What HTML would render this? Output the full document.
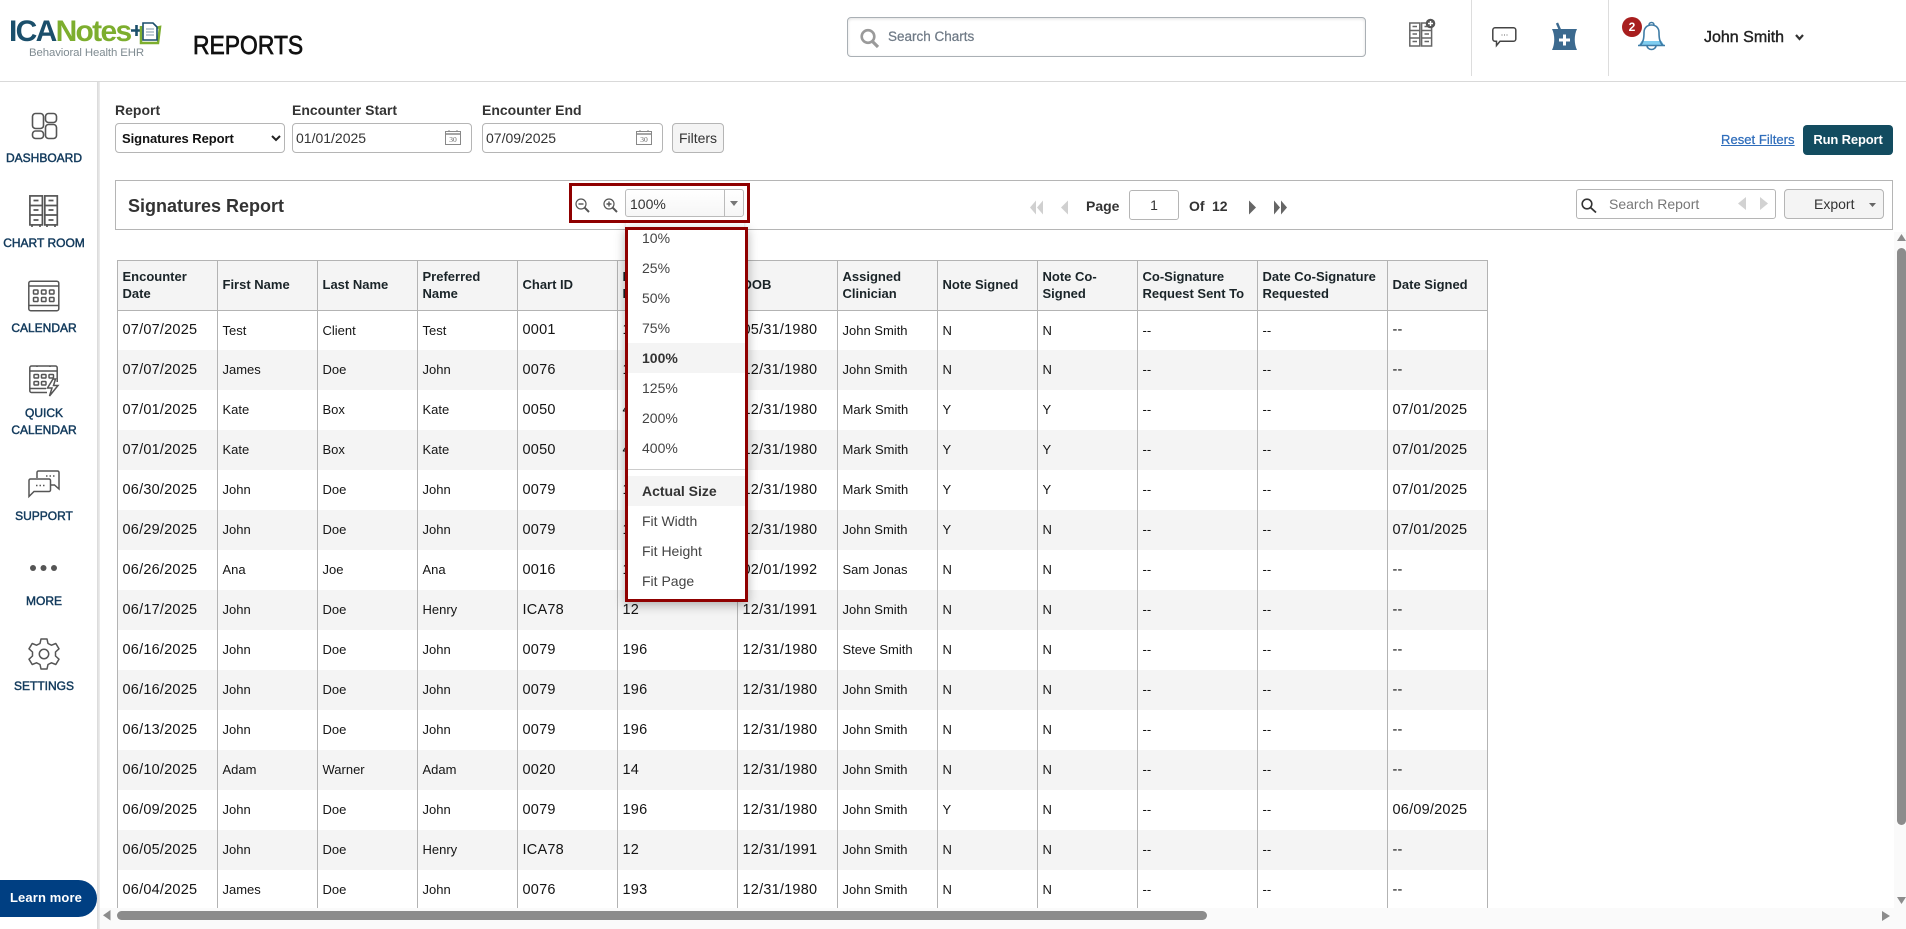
<!DOCTYPE html>
<html lang="en">
<head>
<meta charset="utf-8">
<title>Reports</title>
<style>
*{box-sizing:border-box}
html,body{margin:0;padding:0;width:1906px;height:929px;overflow:hidden;background:#fff;font-family:"Liberation Sans",Arial,sans-serif;color:#333}
.a{position:absolute}
.t{position:absolute;white-space:nowrap}
svg{position:absolute;overflow:visible}
.nav{position:absolute;left:0;width:88px;text-align:center;font-size:12px;line-height:17px;color:#123a5c;-webkit-text-stroke:.45px #123a5c;white-space:nowrap;margin-top:1px}
.lbl{position:absolute;top:102px;font-size:14px;font-weight:bold;line-height:16px;color:#333;white-space:nowrap}
.inp{position:absolute;top:123px;height:30px;border:1px solid #b5b5b5;border-radius:4px;background:#fff}
#tw{position:absolute;left:117px;top:260px;width:1371px;height:648px;overflow:hidden}
table{border-collapse:separate;border-spacing:0;table-layout:fixed;width:1371px;color:#141414}
th{height:51px;background:#f4f4f4;border-top:1px solid #b3b3b3;border-bottom:1px solid #b3b3b3;border-left:1px solid #b3b3b3;font-size:13px;line-height:17px;font-weight:bold;text-align:left;padding:0 3px 2px 4.5px;color:#1a2428}
td{height:40px;border-left:1px solid #b3b3b3;font-size:13px;padding:0 3px 1px 4.5px;white-space:nowrap;overflow:hidden}
tr:first-child td{height:39px}
th:last-child,td:last-child{border-right:1px solid #b3b3b3}
tbody tr:nth-child(even) td{background:#f4f4f4}
td:nth-child(1),td:nth-child(5),td:nth-child(6),td:nth-child(7),td:nth-child(13){font-size:14.5px;letter-spacing:.22px}
.mi{position:absolute;left:628px;width:117px;height:30px;line-height:30px;padding-left:14px;font-size:14px;color:#444}
.mi.b{font-weight:bold;background:#f4f4f4;color:#333}
</style>
</head>
<body>

<!-- top bar -->
<div class="a" style="left:0;top:81px;width:1906px;height:1px;background:#d9d9d9"></div>
<div class="t" style="left:9px;top:15px;font-size:30px;line-height:34px;font-weight:bold;letter-spacing:-1.7px"><span style="color:#1b4f6b">ICA</span><span style="color:#7dae2e">Notes</span></div>
<div class="t" style="left:29px;top:46px;font-size:11.4px;line-height:14px;color:#7f8b91;letter-spacing:-.1px">Behavioral Health EHR</div>
<svg style="left:130px;top:20px" width="32" height="28" viewBox="0 0 32 28">
<path d="M1 10.5H12M6.5 5V16" stroke="#1b4f6b" stroke-width="2.6" fill="none"/>
<path d="M11 6V23H28L30 7L26 8" fill="none" stroke="#7dae2e" stroke-width="2.5"/>
<path d="M13 3H23L27 7V20H13Z" fill="#fff" stroke="#1b4f6b" stroke-width="1.6"/>
<path d="M16 9H24M16 12H24M16 15H24" stroke="#7f9aa8" stroke-width="1"/>
</svg>
<div class="t" style="left:193px;top:30px;font-size:26px;line-height:30px;color:#111;-webkit-text-stroke:.7px #111;transform:scaleX(.88);transform-origin:left center">REPORTS</div>

<div class="a" style="left:847px;top:17px;width:519px;height:40px;border:1px solid #aab0b5;border-radius:4px;box-shadow:inset 0 1px 3px rgba(0,0,0,.12)"></div>
<svg style="left:860px;top:29px" width="20" height="19" viewBox="0 0 20 19"><circle cx="8" cy="7.5" r="6.3" fill="none" stroke="#9a9a9a" stroke-width="2.6"/><path d="M12.5 12.5L18 18" stroke="#9a9a9a" stroke-width="3.2"/></svg>
<div class="t" style="left:888px;top:29px;font-size:13.5px;line-height:16px;color:#6f7a86;-webkit-text-stroke:.25px #6f7a86">Search Charts</div>

<svg style="left:1409px;top:19px" width="27" height="28" viewBox="0 0 27 28" fill="none" stroke="#666" stroke-width="1.5">
<rect x=".8" y="4" width="10" height="23"/><rect x="12.6" y="4" width="10" height="23"/>
<path d="M.8 11.5H10.800M.8 19H10.800M12.600 11.500H22.600M12.600 19H22.600M3.500 7.500H8M3.500 15H8M3.500 22.500H8M15.500 7.500H20M15.500 15H20M15.500 22.500H20"/>
<circle cx="21.5" cy="4.5" r="4.8" fill="#555" stroke="none"/><path d="M19 4.5H24M21.5 2V7" stroke="#fff" stroke-width="1.4"/>
</svg>
<div class="a" style="left:1471px;top:0;width:1px;height:76px;background:#ddd"></div>
<svg style="left:1492px;top:27px" width="25" height="20" viewBox="0 0 25 20" fill="none"><path d="M3 .8H21.5A2.3 2.3 0 0 1 23.8 3V12A2.3 2.3 0 0 1 21.5 14.3H8L4.5 18.5V14.3H3A2.3 2.3 0 0 1 .8 12V3A2.3 2.3 0 0 1 3 .8Z" stroke="#444" stroke-width="1.5"/><path d="M9.5 8H10.5M12 8H13M14.5 8H15.5" stroke="#666"/></svg>
<svg style="left:1552px;top:23px" width="26" height="28" viewBox="0 0 26 28"><path d="M5 0L8 7" stroke="#3c6a8f" stroke-width="2.4"/><path d="M0 6H25C22 12 22 21 25 27H0C3 21 3 12 0 6Z" fill="#3c6a8f"/><path d="M7 17H18M12.500 11.500V22.500" stroke="#fff" stroke-width="3"/></svg>
<div class="a" style="left:1608px;top:0;width:1px;height:76px;background:#ddd"></div>
<svg style="left:1637px;top:21px" width="29" height="29" viewBox="0 0 29 29" fill="none">
<path d="M4.500 20H24.500L27 24H2Z" fill="#7fcdf0"/>
<path d="M10 24.500A4.500 4 0 0 0 19 24.500" stroke="#3f7ca6" stroke-width="1.600"/>
<path d="M1 24.500H28M3 24.500C6.500 21 7 17 7 11.500C7 7 10 4 14.500 4C19 4 22 7 22 11.500C22 17 22.500 21 26 24.500" stroke="#3f7ca6" stroke-width="1.600"/>
<path d="M12 4A2.500 2.500 0 0 1 17 4" stroke="#3f7ca6" stroke-width="1.600"/>
</svg>
<div class="a" style="left:1622px;top:17px;width:20px;height:20px;border-radius:50%;background:#a81e1e;color:#fff;font-size:12px;font-weight:bold;line-height:20px;text-align:center">2</div>
<div class="t" style="left:1704px;top:28px;font-size:16px;line-height:20px;color:#222;-webkit-text-stroke:.4px #222">John Smith</div>
<svg style="left:1795px;top:34px" width="9" height="7" viewBox="0 0 9 7"><path d="M1 1L4.500 5L8 1" fill="none" stroke="#333" stroke-width="2.200"/></svg>

<!-- sidebar -->
<div class="a" style="left:97px;top:82px;width:3px;height:847px;background:linear-gradient(90deg,#d8d8d8,#eee)"></div>

<svg style="left:31px;top:112px" width="28" height="28" viewBox="0 0 28 28" fill="none" stroke="#555" stroke-width="1.6">
<rect x="1.500" y="1.500" width="11" height="15" rx="3"/><rect x="14.500" y="1.500" width="11" height="9" rx="3"/><rect x="1.500" y="19" width="11" height="7.500" rx="3"/><rect x="14.500" y="12.500" width="11" height="14" rx="3"/></svg>
<div class="nav" style="top:149px">DASHBOARD</div>

<svg style="left:29px;top:195px" width="30" height="33" viewBox="0 0 30 33" fill="none" stroke="#555" stroke-width="1.700">
<rect x=".9" y=".9" width="12.500" height="29"/><rect x="15.800" y=".9" width="12.500" height="29"/>
<path d="M.9 10.500H13.400M.9 20H13.400M15.800 10.500H28.300M15.800 20H28.300M4.500 5.500H9.500M4.500 15H9.500M4.500 25H9.500M19.500 5.500H24.500M19.500 15H24.500M19.500 25H24.500M3 30V32M11 30V32M18 30V32M26 30V32"/></svg>
<div class="nav" style="top:234px">CHART ROOM</div>

<svg style="left:28px;top:280px" width="32" height="32" viewBox="0 0 32 32" fill="none" stroke="#555" stroke-width="1.500">
<rect x=".8" y="1.200" width="30" height="29.500" rx="2"/><path d="M.8 6H31M.8 25.500H31M8 .5V2M24 .5V2"/>
<rect x="5.500" y="10" width="4.500" height="4" rx=".8"/><rect x="13.500" y="10" width="4.500" height="4" rx=".8"/><rect x="21.500" y="10" width="4.500" height="4" rx=".8"/>
<rect x="5.500" y="17.500" width="4.500" height="4" rx=".8"/><rect x="13.500" y="17.500" width="4.500" height="4" rx=".8"/><rect x="21.500" y="17.500" width="4.500" height="4" rx=".8"/></svg>
<div class="nav" style="top:319px">CALENDAR</div>

<svg style="left:29px;top:365px" width="30" height="32" viewBox="0 0 30 32" fill="none" stroke="#555" stroke-width="1.500">
<path d="M18 27.500H2.500A1.700 1.700 0 0 1 .8 25.800V2.700A1.700 1.700 0 0 1 2.500 1H26.500A1.700 1.700 0 0 1 28.200 2.700V17"/><path d="M.8 6H28.200M.8 23.500H17M8 .5V2M21 .5V2"/>
<rect x="5" y="9.500" width="4.500" height="3.500" rx=".8"/><rect x="12.500" y="9.500" width="4.500" height="3.500" rx=".8"/><rect x="20" y="9.500" width="4.500" height="3.500" rx=".8"/>
<rect x="5" y="16.500" width="4.500" height="3.500" rx=".8"/><rect x="12.500" y="16.500" width="4.500" height="3.500" rx=".8"/>
<path d="M24 14L18.500 23H23L20.500 31L29 20.500H24.500L26.500 14Z" fill="#fff"/></svg>
<div class="nav" style="top:404px">QUICK</div>
<div class="nav" style="top:421px">CALENDAR</div>

<svg style="left:28px;top:470px" width="32" height="28" viewBox="0 0 32 28" fill="none" stroke="#555" stroke-width="1.500">
<path d="M9 8V2.500A1.500 1.500 0 0 1 10.500 1H29.500A1.500 1.500 0 0 1 31 2.500V19L26.500 15H22"/>
<path d="M2.500 9H21A1.500 1.500 0 0 1 22.500 10.500V20A1.500 1.500 0 0 1 21 21.500H6L1 26.500V10.500A1.500 1.500 0 0 1 2.500 9Z" fill="#fff"/>
<path d="M8 15.500H9.500M11.500 15.500H13M15 15.500H16.500M18 6H19.500M21.500 6H23M25 6H26.500"/></svg>
<div class="nav" style="top:507px">SUPPORT</div>

<svg style="left:29px;top:564px" width="30" height="8" viewBox="0 0 30 8" fill="#555"><circle cx="4" cy="4" r="3"/><circle cx="14.500" cy="4" r="3"/><circle cx="25" cy="4" r="3"/></svg>
<div class="nav" style="top:592px">MORE</div>

<svg style="left:28px;top:638px" width="32" height="32" viewBox="0 0 32 32" fill="none" stroke="#555" stroke-width="1.500" stroke-linejoin="round">
<path d="M13 1H19L20 5.500L23.500 7.200L27.800 5.500L31 10.800L27.500 14V18L31 21.200L27.800 26.500L23.500 24.800L20 26.500L19 31H13L12 26.500L8.500 24.800L4.200 26.500L1 21.200L4.500 18V14L1 10.800L4.200 5.500L8.500 7.200L12 5.500Z"/>
<circle cx="16" cy="16" r="4.700"/></svg>
<div class="nav" style="top:677px">SETTINGS</div>

<div class="a" style="left:-18px;top:880px;width:115px;height:37px;border-radius:19px;background:#003f82"></div>
<div class="t" style="left:10px;top:890px;font-size:13px;line-height:16px;font-weight:bold;color:#fff;letter-spacing:.12px">Learn more</div>

<!-- filters -->
<div class="lbl" style="left:115px">Report</div>
<div class="lbl" style="left:292px">Encounter Start</div>
<div class="lbl" style="left:482px">Encounter End</div>

<div class="inp" style="left:115px;width:170px"></div>
<div class="t" style="left:122px;top:131px;font-size:13px;line-height:16px;font-weight:bold;color:#111;letter-spacing:-.05px">Signatures Report</div>
<svg style="left:271px;top:135px" width="10" height="7" viewBox="0 0 10 7"><path d="M1 1L5 5L9 1" fill="none" stroke="#222" stroke-width="2"/></svg>

<div class="inp" style="left:292px;width:180px"></div>
<div class="t" style="left:296px;top:130px;font-size:14px;line-height:16px">01/01/2025</div>
<svg style="left:445px;top:130px" width="16" height="15" viewBox="0 0 16 15"><rect x=".5" y="1.500" width="15" height="13" fill="#fff" stroke="#888"/><path d="M.5 4H15.500" stroke="#888" stroke-width="1.500"/><path d="M4 0V2M12 0V2" stroke="#888"/><text x="8" y="12" font-size="7.500" text-anchor="middle" fill="#666" font-family="Liberation Serif">30</text></svg>

<div class="inp" style="left:482px;width:181px"></div>
<div class="t" style="left:486px;top:130px;font-size:14px;line-height:16px">07/09/2025</div>
<svg style="left:636px;top:130px" width="16" height="15" viewBox="0 0 16 15"><rect x=".5" y="1.500" width="15" height="13" fill="#fff" stroke="#888"/><path d="M.5 4H15.500" stroke="#888" stroke-width="1.500"/><path d="M4 0V2M12 0V2" stroke="#888"/><text x="8" y="12" font-size="7.500" text-anchor="middle" fill="#666" font-family="Liberation Serif">30</text></svg>

<div class="inp" style="left:672px;width:52px;background:#f4f4f4;text-align:center;font-size:14px;line-height:28px">Filters</div>

<div class="t" style="left:1721px;top:132px;font-size:13px;line-height:16px;color:#2f6dbb;text-decoration:underline;-webkit-text-stroke:.25px #2f6dbb;letter-spacing:.05px">Reset Filters</div>
<div class="a" style="left:1803px;top:125px;width:90px;height:30px;background:#134c60;border-radius:4px;color:#fff;font-size:13px;font-weight:bold;text-align:center;line-height:30px;letter-spacing:-.15px">Run Report</div>

<!-- report toolbar -->
<div class="a" style="left:115px;top:180px;width:1778px;height:50px;border:1px solid #b5b5b5"></div>
<div class="t" style="left:128px;top:196px;font-size:18px;line-height:21px;font-weight:bold;color:#333">Signatures Report</div>

<!-- pager -->
<svg style="left:1029px;top:200px" width="15" height="15" viewBox="0 0 15 15" fill="#d0d0d0"><path d="M7 .5V14.500L1 7.500ZM14 .5V14.500L8 7.500Z"/></svg>
<svg style="left:1060px;top:200px" width="9" height="15" viewBox="0 0 9 15" fill="#d0d0d0"><path d="M8 .5V14.500L1 7.500Z"/></svg>
<div class="t" style="left:1086px;top:198px;font-size:14px;line-height:16px;font-weight:bold">Page</div>
<div class="a" style="left:1129px;top:190px;width:50px;height:30px;border:1px solid #b5b5b5;border-radius:3px;text-align:center;font-size:14px;line-height:28px">1</div>
<div class="t" style="left:1189px;top:198px;font-size:14px;line-height:16px;font-weight:bold">Of</div>
<div class="t" style="left:1212px;top:198px;font-size:14px;line-height:16px;font-weight:bold">12</div>
<svg style="left:1248px;top:200px" width="9" height="15" viewBox="0 0 9 15" fill="#666"><path d="M1 .5V14.500L8 7.500Z"/></svg>
<svg style="left:1273px;top:200px" width="15" height="15" viewBox="0 0 15 15" fill="#666"><path d="M1 .5V14.500L7 7.500ZM8 .5V14.500L14 7.500Z"/></svg>

<!-- search report / export -->
<div class="a" style="left:1576px;top:189px;width:200px;height:30px;border:1px solid #b5b5b5;border-radius:3px"></div>
<svg style="left:1581px;top:198px" width="16" height="15" viewBox="0 0 16 15"><circle cx="6" cy="6" r="4.800" fill="none" stroke="#333" stroke-width="1.600"/><path d="M9.500 9.500L15 14.500" stroke="#333" stroke-width="1.800"/></svg>
<div class="t" style="left:1609px;top:196px;font-size:14px;line-height:16px;color:#777">Search Report</div>
<svg style="left:1738px;top:197px" width="30" height="13" viewBox="0 0 30 13" fill="#d2d2d2"><path d="M8 0V13L0 6.500ZM22 0V13L30 6.500Z"/></svg>
<div class="a" style="left:1784px;top:189px;width:100px;height:30px;border:1px solid #b5b5b5;border-radius:4px;background:#f4f4f4"></div>
<div class="t" style="left:1814px;top:196px;font-size:14px;line-height:16px;color:#333">Export</div>
<svg style="left:1869px;top:203px" width="7" height="4" viewBox="0 0 7 4" fill="#666"><path d="M0 0H7L3.500 4Z"/></svg>

<!-- table -->
<div id="tw">
<table>
<colgroup><col style="width:100px"><col style="width:100px"><col style="width:100px"><col style="width:100px"><col style="width:100px"><col style="width:120px"><col style="width:100px"><col style="width:100px"><col style="width:100px"><col style="width:100px"><col style="width:120px"><col style="width:130px"><col style="width:101px"></colgroup>
<thead><tr><th>Encounter Date</th><th>First Name</th><th>Last Name</th><th>Preferred Name</th><th>Chart ID</th><th>Encounter<br>ID</th><th>DOB</th><th>Assigned Clinician</th><th>Note Signed</th><th>Note Co-Signed</th><th>Co-Signature Request Sent To</th><th>Date Co-Signature Requested</th><th>Date Signed</th></tr></thead>
<tbody>
<tr><td>07/07/2025</td><td>Test</td><td>Client</td><td>Test</td><td>0001</td><td>1</td><td>05/31/1980</td><td>John Smith</td><td>N</td><td>N</td><td>--</td><td>--</td><td>--</td></tr>
<tr><td>07/07/2025</td><td>James</td><td>Doe</td><td>John</td><td>0076</td><td>193</td><td>12/31/1980</td><td>John Smith</td><td>N</td><td>N</td><td>--</td><td>--</td><td>--</td></tr>
<tr><td>07/01/2025</td><td>Kate</td><td>Box</td><td>Kate</td><td>0050</td><td>45</td><td>12/31/1980</td><td>Mark Smith</td><td>Y</td><td>Y</td><td>--</td><td>--</td><td>07/01/2025</td></tr>
<tr><td>07/01/2025</td><td>Kate</td><td>Box</td><td>Kate</td><td>0050</td><td>45</td><td>12/31/1980</td><td>Mark Smith</td><td>Y</td><td>Y</td><td>--</td><td>--</td><td>07/01/2025</td></tr>
<tr><td>06/30/2025</td><td>John</td><td>Doe</td><td>John</td><td>0079</td><td>196</td><td>12/31/1980</td><td>Mark Smith</td><td>Y</td><td>Y</td><td>--</td><td>--</td><td>07/01/2025</td></tr>
<tr><td>06/29/2025</td><td>John</td><td>Doe</td><td>John</td><td>0079</td><td>196</td><td>12/31/1980</td><td>John Smith</td><td>Y</td><td>N</td><td>--</td><td>--</td><td>07/01/2025</td></tr>
<tr><td>06/26/2025</td><td>Ana</td><td>Joe</td><td>Ana</td><td>0016</td><td>14</td><td>02/01/1992</td><td>Sam Jonas</td><td>N</td><td>N</td><td>--</td><td>--</td><td>--</td></tr>
<tr><td>06/17/2025</td><td>John</td><td>Doe</td><td>Henry</td><td>ICA78</td><td>12</td><td>12/31/1991</td><td>John Smith</td><td>N</td><td>N</td><td>--</td><td>--</td><td>--</td></tr>
<tr><td>06/16/2025</td><td>John</td><td>Doe</td><td>John</td><td>0079</td><td>196</td><td>12/31/1980</td><td>Steve Smith</td><td>N</td><td>N</td><td>--</td><td>--</td><td>--</td></tr>
<tr><td>06/16/2025</td><td>John</td><td>Doe</td><td>John</td><td>0079</td><td>196</td><td>12/31/1980</td><td>John Smith</td><td>N</td><td>N</td><td>--</td><td>--</td><td>--</td></tr>
<tr><td>06/13/2025</td><td>John</td><td>Doe</td><td>John</td><td>0079</td><td>196</td><td>12/31/1980</td><td>John Smith</td><td>N</td><td>N</td><td>--</td><td>--</td><td>--</td></tr>
<tr><td>06/10/2025</td><td>Adam</td><td>Warner</td><td>Adam</td><td>0020</td><td>14</td><td>12/31/1980</td><td>John Smith</td><td>N</td><td>N</td><td>--</td><td>--</td><td>--</td></tr>
<tr><td>06/09/2025</td><td>John</td><td>Doe</td><td>John</td><td>0079</td><td>196</td><td>12/31/1980</td><td>John Smith</td><td>Y</td><td>N</td><td>--</td><td>--</td><td>06/09/2025</td></tr>
<tr><td>06/05/2025</td><td>John</td><td>Doe</td><td>Henry</td><td>ICA78</td><td>12</td><td>12/31/1991</td><td>John Smith</td><td>N</td><td>N</td><td>--</td><td>--</td><td>--</td></tr>
<tr><td>06/04/2025</td><td>James</td><td>Doe</td><td>John</td><td>0076</td><td>193</td><td>12/31/1980</td><td>John Smith</td><td>N</td><td>N</td><td>--</td><td>--</td><td>--</td></tr>
</tbody>
</table>
</div>

<!-- scrollbars -->
<div class="a" style="left:100px;top:908px;width:1794px;height:21px;background:#fafafa"></div>
<div class="a" style="left:1894px;top:232px;width:12px;height:697px;background:#fafafa"></div>
<svg style="left:103px;top:910px" width="8" height="11" viewBox="0 0 8 11" fill="#8c8c8c"><path d="M7.500 0V10.500L0 5.250Z"/></svg>
<div class="a" style="left:117px;top:911px;width:1090px;height:9px;border-radius:5px;background:#8c8c8c"></div>
<svg style="left:1882px;top:911px" width="8" height="10" viewBox="0 0 8 10" fill="#8c8c8c"><path d="M0 0V10L8 5Z"/></svg>
<svg style="left:1897px;top:234px" width="10" height="8" viewBox="0 0 10 8" fill="#8c8c8c"><path d="M0 7L4.500 0L9 7Z"/></svg>
<div class="a" style="left:1897px;top:248px;width:9px;height:577px;border-radius:5px;background:#8c8c8c"></div>
<svg style="left:1897px;top:897px" width="10" height="8" viewBox="0 0 10 8" fill="#8c8c8c"><path d="M0 0H9L4.500 7Z"/></svg>

<!-- dropdown -->
<div class="a" style="left:626px;top:217px;width:118px;height:12px;background:#fff;box-shadow:0 1px 3px rgba(0,0,0,.15)"></div>
<div class="a" style="left:625px;top:227px;width:123px;height:375px;background:#fff;border:3px solid #8f0000;box-shadow:0 3px 10px rgba(0,0,0,.3)"></div>
<div class="mi" style="top:223px">10%</div>
<div class="mi" style="top:253px">25%</div>
<div class="mi" style="top:283px">50%</div>
<div class="mi" style="top:313px">75%</div>
<div class="mi b" style="top:343px">100%</div>
<div class="mi" style="top:373px">125%</div>
<div class="mi" style="top:403px">200%</div>
<div class="mi" style="top:433px">400%</div>
<div class="a" style="left:628px;top:469px;width:117px;height:1px;background:#ccc"></div>
<div class="mi b" style="top:476px">Actual Size</div>
<div class="mi" style="top:506px">Fit Width</div>
<div class="mi" style="top:536px">Fit Height</div>
<div class="mi" style="top:566px">Fit Page</div>

<!-- zoom box -->
<div class="a" style="left:569px;top:183px;width:181px;height:40px;border:3px solid #8f0000;background:#fff"></div>
<svg style="left:575px;top:198px" width="15" height="15" viewBox="0 0 15 15" fill="none" stroke="#555"><circle cx="6" cy="6" r="5" stroke-width="1.200"/><path d="M3.500 6H8.500" stroke-width="1.400"/><path d="M9.700 9.700L14 14" stroke-width="2"/></svg>
<svg style="left:603px;top:198px" width="15" height="15" viewBox="0 0 15 15" fill="none" stroke="#555"><circle cx="6" cy="6" r="5" stroke-width="1.200"/><path d="M3.500 6H8.500M6 3.500V8.500" stroke-width="1.400"/><path d="M9.700 9.700L14 14" stroke-width="2"/></svg>
<div class="a" style="left:625px;top:189px;width:119px;height:28px;border:1px solid #bbb;border-radius:3px;background:linear-gradient(#fff,#f6f6f6)"></div>
<div class="a" style="left:724px;top:190px;width:1px;height:26px;background:#bbb"></div>
<div class="t" style="left:630px;top:196px;font-size:14px;line-height:16px;color:#333">100%</div>
<svg style="left:730px;top:201px" width="8" height="5" viewBox="0 0 8 5" fill="#777"><path d="M0 0H8L4 5Z"/></svg>

</body>
</html>
